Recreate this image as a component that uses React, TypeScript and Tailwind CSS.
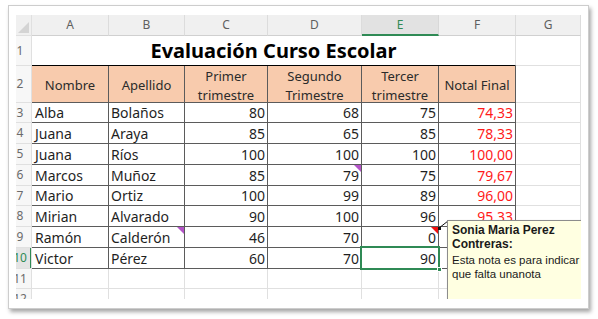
import React from 'react';

// Spreadsheet snapshot: "Evaluación Curso Escolar" with a note tooltip on E9.
const letters = ['A', 'B', 'C', 'D', 'E', 'F', 'G'];

type Row = [string, string, number, number, number, string];

const rows: Row[] = [
  ['Alba', 'Bolaños', 80, 68, 75, '74,33'],
  ['Juana', 'Araya', 85, 65, 85, '78,33'],
  ['Juana', 'Ríos', 100, 100, 100, '100,00'],
  ['Marcos', 'Muñoz', 85, 79, 75, '79,67'],
  ['Mario', 'Ortiz', 100, 99, 89, '96,00'],
  ['Mirian', 'Alvarado', 90, 100, 96, '95,33'],
  ['Ramón', 'Calderón', 46, 70, 0, ''],
  ['Victor', 'Pérez', 60, 70, 90, ''],
];

const dark = 'border-[#5b5b5b]';
const light = 'border-[#e0e0e0]';

function RowHead({ n, table, active }: { n: number; table?: boolean; active?: boolean }) {
  return (
    <div
      className={`relative overflow-hidden border-b border-r ${light} ${
        active ? 'bg-[#e4e4e4] text-[#2f8a55]' : 'bg-[#f7f7f7] text-[#6b6b6b]'
      } ${table ? dark.replace('border-', 'border-r-') : ''}`}
    >
      <div className="ml-[-8px] flex h-full w-[24px] items-center justify-center text-[12px]">{n}</div>
      {active && <div className="absolute bottom-0 right-[-1px] top-0 w-[2px] bg-[#2f8a55]" />}
    </div>
  );
}

function Corner({ color }: { color: string }) {
  return (
    <svg className="absolute right-0 top-0" width="7" height="7" viewBox="0 0 7 7">
      <polygon points="0,0 7,0 7,7" fill={color} />
    </svg>
  );
}

export default function App() {
  return (
    <div className="h-[319px] w-[598px] bg-white pl-[8px] pt-[5px]" style={{ fontFamily: '"Noto Sans", Arial, sans-serif' }}>
      <div className="h-[304px] w-[581px] border border-[#cdcdcd] bg-white pl-[7px] pt-[9px] shadow-[2px_3px_4px_rgba(0,0,0,0.35)]">
        <div className="relative h-[284px] w-[565px] overflow-hidden">
          <div className="grid grid-cols-[16px_77px_76px_83px_94px_77px_77px_65px] grid-rows-[21px_30px_37px_20px_21px_21px_21px_20px_21px_21px_21px_20px_20px] text-[13px] text-[#1f1f1f]">
            {/* column headers */}
            <div className={`relative border-b border-r ${light} bg-[#f0f0f0]`}>
              <svg className="absolute bottom-[2px] right-[2px]" width="11" height="11" viewBox="0 0 11 11">
                <polygon points="11,0 11,11 0,11" fill="#d4d4d4" />
              </svg>
            </div>
            {letters.map((l) =>
              l === 'E' ? (
                <div key={l} className="flex items-center justify-center border-b-2 border-r border-b-[#2f8a55] border-r-[#d8d8d8] bg-[#e2e2e2] text-[12px] text-[#2f8a55]">
                  {l}
                </div>
              ) : (
                <div key={l} className="flex items-center justify-center border-b border-r border-b-[#d0d0d0] border-r-[#dcdcdc] bg-[#f0f0f0] text-[12px] text-[#5f5f5f]">
                  {l}
                </div>
              ),
            )}

            {/* row 1: title */}
            <RowHead n={1} />
            <div className={`col-span-6 flex items-center justify-center border-b border-r border-r-[#e0e0e0] ${dark.replace('border-', 'border-b-')} text-[20px] font-bold text-black`}>
              Evaluación Curso Escolar
            </div>
            <div className={`border-b border-r ${light}`} />

            {/* row 2: headers */}
            <RowHead n={2} table />
            {[['Nombre'], ['Apellido'], ['Primer', 'trimestre'], ['Segundo', 'Trimestre'], ['Tercer', 'trimestre'], ['Notal Final']].map((h) => (
              <div key={h.join()} className={`flex flex-col items-center justify-center border-b border-r ${dark} bg-[#f8cbad] pt-[3px] leading-[19px] text-[#2b2b2b]`}>
                {h.map((t) => (
                  <span key={t}>{t}</span>
                ))}
              </div>
            ))}
            <div className={`border-b border-r ${light}`} />

            {/* data rows */}
            {rows.map((r, i) => {
              const n = i + 3;
              return (
                <React.Fragment key={n}>
                  <RowHead n={n} table active={n === 10} />
                  <div className={`flex items-center border-b border-r ${dark} pl-[3px] text-[14px]`}>{r[0]}</div>
                  <div className={`relative flex items-center border-b border-r ${dark} pl-[2px] text-[14px]`}>
                    {r[1]}
                    {n === 9 && <Corner color="#b454c8" />}
                  </div>
                  {[r[2], r[3], r[4]].map((v, j) => (
                    <div key={j} className={`relative flex items-center justify-end border-b border-r ${dark} pr-[2px] text-[14px]`}>
                      {v}
                      {n === 6 && j === 1 && <Corner color="#b454c8" />}
                      {n === 9 && j === 2 && <Corner color="#f01010" />}
                      {n === 10 && j === 2 && (
                        <>
                          <div className="absolute bottom-[-2px] left-[-2px] right-[-2px] top-[-2px] border-2 border-[#2f8a55]" />
                          <div className="absolute bottom-[-4px] right-[-4px] h-[5px] w-[5px] border border-white bg-[#2f8a55]" />
                        </>
                      )}
                    </div>
                  ))}
                  <div className={`flex items-center justify-end border-b border-r ${dark} pr-[2px] text-[14px] text-[#ff1a1a]`}>{r[5]}</div>
                  <div className={`border-b border-r ${light}`} />
                </React.Fragment>
              );
            })}

            {/* empty rows */}
            {[11, 12].map((n) => (
              <React.Fragment key={n}>
                <RowHead n={n} />
                {letters.map((l) => (
                  <div key={l} className={`border-b border-r ${light}`} />
                ))}
              </React.Fragment>
            ))}
          </div>

          {/* note connector */}
          <svg className="absolute left-[420px] top-[203px]" width="14" height="14" viewBox="0 0 14 14">
            <line x1="3" y1="10" x2="12" y2="3" stroke="#111" strokeWidth="1" />
            <rect x="2" y="9" width="3" height="3" fill="#111" />
          </svg>

          {/* note tooltip */}
          <div
            className="absolute left-[431px] top-[205px] h-[90px] w-[150px] border border-[#8c8c8c] bg-[#ffffe1] pl-[4px] pt-[2px] text-[11.5px] leading-[14px] text-[#1a1a1a] shadow-[1px_1px_2px_rgba(0,0,0,0.3)]"
            style={{ fontFamily: '"Liberation Sans", Arial, sans-serif' }}
          >
            <div className="text-[12px] font-bold leading-[14px]">Sonia Maria Perez</div>
            <div className="mb-[2px] text-[12px] font-bold leading-[14px]">Contreras:</div>
            <div>Esta nota es para indicar</div>
            <div>que falta unanota</div>
          </div>
        </div>
      </div>
    </div>
  );
}
